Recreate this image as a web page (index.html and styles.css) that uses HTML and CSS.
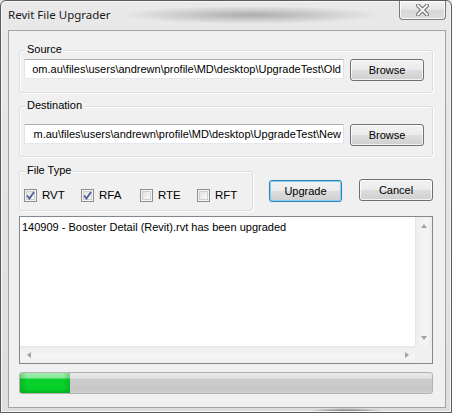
FILE: index.html
```html
<!DOCTYPE html>
<html>
<head>
<meta charset="utf-8">
<link rel="stylesheet" href="styles.css">
</head>
<body>
<div class="window">
  <div class="titlebar">
    <span class="title">Revit File Upgrader</span>
    <div class="close">
      <svg width="13" height="12" viewBox="0 0 13 12">
        <path d="M2 1.5 L11 10.5 M11 1.5 L2 10.5" stroke="#6a6a6a" stroke-width="4" stroke-linecap="square" fill="none"/>
        <path d="M2 1.5 L11 10.5 M11 1.5 L2 10.5" stroke="#f4f4f4" stroke-width="2" stroke-linecap="square" fill="none"/>
      </svg>
    </div>
  </div>
  <div class="client">
    <div class="group src">
      <span class="legend">Source</span>
      <div class="textbox"><span>om.au\files\users\andrewn\profile\MD\desktop\UpgradeTest\Old</span></div>
      <div class="btn browse">Browse</div>
    </div>
    <div class="group dst">
      <span class="legend">Destination</span>
      <div class="textbox"><span>m.au\files\users\andrewn\profile\MD\desktop\UpgradeTest\New</span></div>
      <div class="btn browse">Browse</div>
    </div>
    <div class="row">
      <div class="group ftype">
        <span class="legend">File Type</span>
        <div class="cbs">
          <label class="cb"><span class="box checked"><svg width="9" height="9" viewBox="0 0 9 9"><path d="M1 4.5 L3.5 7.5 L8 1" stroke="#4d5d9b" stroke-width="1.8" fill="none"/></svg></span>RVT</label>
          <label class="cb"><span class="box checked"><svg width="9" height="9" viewBox="0 0 9 9"><path d="M1 4.5 L3.5 7.5 L8 1" stroke="#4d5d9b" stroke-width="1.8" fill="none"/></svg></span>RFA</label>
          <label class="cb"><span class="box"></span>RTE</label>
          <label class="cb"><span class="box"></span>RFT</label>
        </div>
      </div>
      <div class="btn default upgrade">Upgrade</div>
      <div class="btn cancel">Cancel</div>
    </div>
    <div class="listbox">
      <div class="listmain">
        <div class="listtext">140909 - Booster Detail (Revit).rvt has been upgraded</div>
        <div class="vscroll">
          <div class="sbtn"><span class="arr up"></span></div>
          <div class="vtrack"></div>
          <div class="sbtn"><span class="arr down"></span></div>
        </div>
      </div>
      <div class="hrow">
        <div class="hscroll">
          <div class="sbtn h"><span class="arr left"></span></div>
          <div class="htrack"></div>
          <div class="sbtn h"><span class="arr right"></span></div>
        </div>
        <div class="corner"></div>
      </div>
    </div>
    <div class="progress"><div class="fill" style="width:50px"></div></div>
  </div>
</div>
</body>
</html>
```

FILE: styles.css
```css
html, body {
  margin: 0;
  padding: 0;
  background: #e4e4e4;
}
.window {
  width: 452px;
  height: 413px;
  box-sizing: border-box;
  border: 1px solid #5b5b5b;
  border-radius: 6px 6px 0 0;
  padding: 0 5px 4px 7px;
  display: flex;
  flex-direction: column;
  background:
    radial-gradient(ellipse 130px 9px at 250px 14px, rgba(60,60,60,0.35), rgba(60,60,60,0) 100%),
    radial-gradient(ellipse 40px 4px at 345px 411px, rgba(0,0,0,0.6), rgba(0,0,0,0) 100%),
    linear-gradient(#e9e9e9, #dedede);
  box-shadow: inset 1px 1px 0 #f8f8f8, inset -1px -1px 0 #f5f5f5;
}
.titlebar {
  height: 29px;
  flex: none;
  display: flex;
  justify-content: space-between;
  align-items: flex-start;
}
.title {
  font-family: "Noto Sans", "Open Sans", sans-serif;
  font-size: 11.5px;
  color: #1a1a1a;
  margin-top: 6px;
  line-height: 16px;
  margin-left: 0;
}
.close {
  width: 47px;
  height: 19px;
  box-sizing: border-box;
  border: 1px solid #7b7b7b;
  border-top: none;
  border-radius: 0 0 4px 4px;
  background: linear-gradient(#f3f3f3, #e4e4e4 50%, #d6d6d6 51%, #dedede);
  box-shadow: inset 0 0 0 1px rgba(255,255,255,0.8);
  display: flex;
  align-items: center;
  justify-content: center;
}
.client {
  height: 378px;
  box-sizing: border-box;
  border: 1px solid #a3a3a3;
  background: #f0f0f0;
  padding: 19px 12px 0 10px;
  display: flex;
  flex-direction: column;
  font-family: "Liberation Sans", Arial, sans-serif;
  font-size: 11px;
  color: #000;
}
.group {
  position: relative;
  box-sizing: border-box;
  border: 1px solid #d5dfe5;
  border-radius: 3px;
  display: flex;
  align-items: flex-start;
  padding-left: 4px;
  box-shadow: 1px 1px 0 #fff inset, 1px 1px 0 #fff;
}
.legend {
  position: absolute;
  left: 5px;
  top: -8px;
  background: #f0f0f0;
  padding: 0 2px 0 2px;
  line-height: 13px;
}
.src {
  height: 43px;
  padding-top: 8px;
}
.dst {
  height: 51px;
  margin-top: 13px;
  padding-top: 17px;
}
.textbox {
  width: 320px;
  height: 20px;
  box-sizing: border-box;
  border: 1px solid #abadb3;
  border-color: #abadb3 #dbdfe6 #e3e9ef #e2e3ea;
  background: #fff;
  overflow: hidden;
  display: flex;
  justify-content: flex-end;
  align-items: center;
  white-space: nowrap;
  padding-right: 2px;
}
.btn {
  box-sizing: border-box;
  height: 22px;
  border: 1px solid #707070;
  border-radius: 3px;
  background: linear-gradient(#f2f2f2, #ebebeb 50%, #dddddd 51%, #cfcfcf);
  box-shadow: inset 0 0 0 1px rgba(255,255,255,0.75);
  display: flex;
  align-items: center;
  justify-content: center;
  line-height: 13px;
}
.browse {
  width: 74px;
  margin-left: 6px;
}
.row {
  display: flex;
  align-items: flex-start;
  margin-top: 14px;
}
.ftype {
  width: 234px;
  height: 40px;
  padding-top: 17px;
}
.cbs {
  display: grid;
  grid-template-columns: 57px 59px 57px auto;
}
.cb {
  display: flex;
  align-items: center;
  gap: 5px;
  line-height: 13px;
  font-size: 11.5px;
}
.box {
  width: 13px;
  height: 13px;
  box-sizing: border-box;
  border: 1px solid #8e8f8f;
  background: linear-gradient(135deg, #dcdcdc, #ffffff);
  box-shadow: inset 0 0 0 1px #f4f4f4, inset 0 0 0 2px #cfcfcf;
  display: flex;
  align-items: center;
  justify-content: center;
}
.box svg {
  display: block;
}
.upgrade {
  width: 73px;
  margin-top: 9px;
  margin-left: 16px;
}
.default {
  border-color: #3c7fb1;
  box-shadow: inset 0 0 0 1px #7fd3f2, 0 0 1px #7fd3f2;
}
.cancel {
  width: 74px;
  margin-top: 8px;
  margin-left: 17px;
}
.listbox {
  margin-top: 5px;
  height: 148px;
  box-sizing: border-box;
  border: 1px solid #828790;
  background: #fff;
  display: flex;
  flex-direction: column;
}
.listmain {
  flex: 1;
  display: flex;
  min-height: 0;
}
.listtext {
  flex: 1;
  padding: 3px 2px;
  white-space: nowrap;
  line-height: 14px;
  font-size: 11px;
}
.vscroll {
  width: 17px;
  display: flex;
  flex-direction: column;
  background: linear-gradient(90deg, #e3e3e3, #efefef 2px, #f5f5f5 12px, #ececec);
}
.vtrack {
  flex: 1;
}
.sbtn {
  width: 17px;
  height: 17px;
  display: flex;
  align-items: center;
  justify-content: center;
}
.arr {
  width: 0;
  height: 0;
  border-style: solid;
}
.arr.up {
  border-width: 0 3.5px 4px 3.5px;
  border-color: transparent transparent #a2a2a2 transparent;
}
.arr.down {
  border-width: 4px 3.5px 0 3.5px;
  border-color: #a2a2a2 transparent transparent transparent;
}
.arr.left {
  border-width: 3.5px 4px 3.5px 0;
  border-color: transparent #a2a2a2 transparent transparent;
}
.arr.right {
  border-width: 3.5px 0 3.5px 4px;
  border-color: transparent transparent transparent #a2a2a2;
}
.hrow {
  height: 17px;
  display: flex;
  flex: none;
}
.hscroll {
  flex: 1;
  display: flex;
  background: linear-gradient(#e3e3e3, #efefef 2px, #f5f5f5 12px, #ececec);
}
.htrack {
  flex: 1;
}
.corner {
  width: 17px;
  background: #f0f0f0;
}
.progress {
  margin-top: 8px;
  height: 22px;
  box-sizing: border-box;
  border: 1px solid #b2b2b2;
  border-radius: 3px;
  background: linear-gradient(#e8e8e8, #e2e2e2 25%, #cbcbcb 30%, #c8c8c8 85%, #d2d2d2);
  overflow: hidden;
  display: flex;
}
.fill {
  height: 100%;
  background:
    linear-gradient(90deg, rgba(0,120,20,0.25), rgba(0,0,0,0) 15%, rgba(0,0,0,0) 85%, rgba(0,120,20,0.25)),
    linear-gradient(#9ef0ad, #8be89b 25%, #0ad22c 30%, #06cf29 80%, #04b424);
}
```
